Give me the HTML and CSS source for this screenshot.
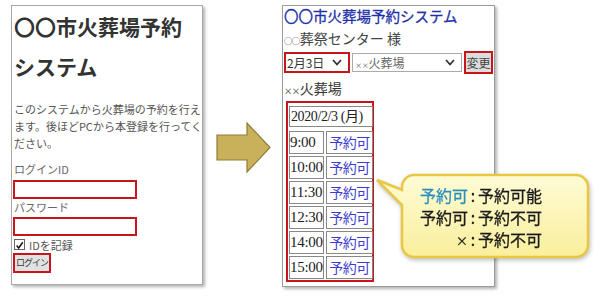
FILE: index.html
```html
<!DOCTYPE html>
<html lang="ja">
<head>
    <meta charset="UTF-8">
    <title>火葬場予約システム</title>
    <link rel="stylesheet" href="styles.css">
</head>
<body>
    <div class="slide">
        <!-- ログイン画面 -->
        <section class="login">
            <h1 class="login-title">〇〇市火葬場予約<br>システム</h1>
            <p class="intro">このシステムから火葬場の予約を行え<br>ます。後ほどPCから本登録を行ってく<br>ださい。</p>
            <div class="field-label">ログインID</div>
            <div class="text-box first"></div>
            <div class="field-label">パスワード</div>
            <div class="text-box"></div>
            <div class="remember">
                <span class="check-box">
                    <svg width="11" height="11" viewBox="0 0 11 11"><path d="M2 5.5 L4.5 8.5 L9.5 1.5" fill="none" stroke="#111" stroke-width="1.8"/></svg>
                </span>
                <span>IDを記録</span>
            </div>
            <div class="login-btn"><span>ログイン</span></div>
        </section>

        <div class="arrow-gap">
            <svg width="79" height="280" viewBox="0 0 79 280">
                <polygon points="14,130 44,130 44,118 67,142.5 44,167 44,155 14,155" fill="#c9b05a" stroke="#8f7d3a" stroke-width="1.2"/>
            </svg>
        </div>

        <!-- 予約画面 -->
        <section class="booking">
            <div class="booking-title">〇〇市火葬場予約システム</div>
            <div class="customer"><span class="mini">○○</span>葬祭センター 様</div>
            <div class="controls">
                <div class="select date-select">
                    <span>2月3日</span>
                    <svg width="10" height="7" viewBox="0 0 10 7"><polyline points="1,1 5,5.5 9,1" fill="none" stroke="#333" stroke-width="1.8"/></svg>
                </div>
                <div class="select hall-select">
                    <span><span class="mini">××</span>火葬場</span>
                    <svg width="10" height="7" viewBox="0 0 10 7"><polyline points="1,1 5,5.5 9,1" fill="none" stroke="#333" stroke-width="1.8"/></svg>
                </div>
                <div class="change-btn"><span>変更</span></div>
            </div>
            <div class="hall-name"><span class="mini">××</span>火葬場</div>
            <div class="slots">
                <div class="cell day">2020/2/3 (月)</div>
                <div class="cell time">9:00</div><div class="cell open">予約可</div>
                <div class="cell time">10:00</div><div class="cell open">予約可</div>
                <div class="cell time">11:30</div><div class="cell open">予約可</div>
                <div class="cell time">12:30</div><div class="cell open">予約可</div>
                <div class="cell time">14:00</div><div class="cell open">予約可</div>
                <div class="cell time">15:00</div><div class="cell open">予約可</div>
            </div>
        </section>

        <!-- 凡例の吹き出し -->
        <div class="callout">
            <svg class="callout-shape" width="218" height="92" viewBox="0 0 218 92">
                <defs>
                    <linearGradient id="calloutFill" x1="0" y1="0" x2="0" y2="1">
                        <stop offset="0" stop-color="#fffbd6"/>
                        <stop offset="1" stop-color="#f9ef9c"/>
                    </linearGradient>
                </defs>
                <path d="M39 3 H201 A12 12 0 0 1 213 15 V73 A12 12 0 0 1 201 85 H39 A12 12 0 0 1 27 73 V33 L2 8 L27 18 V15 A12 12 0 0 1 39 3 Z" fill="url(#calloutFill)" stroke="#e9c644" stroke-width="2.5"/>
            </svg>
            <div class="legend">
                <span class="term avail">予約可</span><span class="colon">:</span><span>予約可能</span>
                <span class="term">予約可</span><span class="colon">:</span><span>予約不可</span>
                <span class="term"><span class="cross">×</span></span><span class="colon">:</span><span>予約不可</span>
            </div>
        </div>
    </div>
</body>
</html>
```

FILE: styles.css
```css
* {
    box-sizing: border-box;
}

body {
    margin: 0;
    background: #fff;
    font-family: "Noto Sans CJK JP", sans-serif;
}

.slide {
    position: relative;
    display: flex;
    align-items: flex-start;
    width: 600px;
    height: 298px;
    padding: 5px 0 0 11px;
}

/* ログイン画面 */
.login {
    width: 192px;
    height: 280px;
    padding: 0 2px;
    border: 1px solid #a8a8a8;
    box-shadow: 2px 2px 3px rgba(0, 0, 0, 0.3);
}

.login-title {
    margin: 0;
    font-size: 21px;
    line-height: 40px;
    font-weight: bold;
    color: #333;
}

.intro {
    margin: 15px 0 0;
    font-size: 11px;
    line-height: 17px;
    color: #555;
    white-space: nowrap;
}

.field-label {
    height: 17px;
    font-size: 11px;
    line-height: 17px;
    color: #666;
}

.intro + .field-label {
    margin-top: 9px;
}

.text-box {
    width: 124px;
    height: 19px;
    margin: 1px 0 0 -1px;
    border: 2px solid #c8151b;
    background: #fff;
}

.text-box.first {
    margin-top: 2px;
}

.remember {
    display: flex;
    align-items: center;
    gap: 4px;
    height: 17px;
    font-size: 11px;
    color: #555;
}

.check-box {
    display: flex;
    width: 11px;
    height: 11px;
    border: 1px solid #666;
    background: #fff;
}

.login-btn {
    display: flex;
    width: 38px;
    height: 20px;
    margin-left: -1px;
    border: 2px solid #c8151b;
    overflow: hidden;
}

.login-btn span {
    flex: 1;
    background: #e2e2e2;
    font-size: 9px;
    line-height: 16px;
    color: #333;
    text-align: center;
    letter-spacing: -1px;
    white-space: nowrap;
}

/* 矢印 */
.arrow-gap {
    display: flex;
    width: 79px;
    height: 280px;
}

/* 予約画面 */
.booking {
    width: 213px;
    height: 282px;
    padding: 0 0 0 1px;
    border: 1px solid #9c9c9c;
    box-shadow: 2px 2px 3px rgba(0, 0, 0, 0.3);
}

.booking-title {
    font-size: 14.5px;
    line-height: 20px;
    color: #1e2fa8;
    white-space: nowrap;
    -webkit-text-stroke: 0.3px #1e2fa8;
}

.mini {
    font-size: 0.6em;
    letter-spacing: -0.5px;
}

.customer {
    margin-top: 2px;
    font-size: 14px;
    line-height: 20px;
    color: #444;
}

.controls {
    display: flex;
    align-items: center;
    gap: 2px;
    height: 22px;
    margin-top: 1px;
}

.select {
    display: flex;
    align-items: center;
    justify-content: space-between;
    font-size: 12px;
    background: #fff;
}

.date-select {
    width: 66px;
    height: 21px;
    padding: 0 6px 0 1px;
    border: 2px solid #c8151b;
    color: #333;
}

.hall-select {
    width: 110px;
    height: 19px;
    padding: 0 6px 0 2px;
    border: 1px solid #aaa;
    color: #666;
}

.change-btn {
    display: flex;
    width: 29px;
    height: 23px;
    border: 2px solid #c8151b;
}

.change-btn span {
    flex: 1;
    background: #dcdcdc;
    font-size: 12px;
    line-height: 19px;
    color: #444;
    text-align: center;
}

.hall-name {
    margin-top: 5px;
    font-size: 14px;
    line-height: 20px;
    color: #333;
}

.slots {
    display: grid;
    grid-template-columns: 35px 47px;
    grid-auto-rows: 23px;
    gap: 2px;
    width: 88px;
    margin: 1px 0 0 2px;
    padding: 3px 1px 1px 1px;
    border: 2px solid #c8151b;
}

.cell {
    border: 1px solid #888;
    font-size: 15px;
    line-height: 21px;
    white-space: nowrap;
    overflow: hidden;
}

.day {
    grid-column: span 2;
    height: 21px;
    margin-bottom: 2px;
    padding-left: 1px;
    font-size: 14px;
    line-height: 19px;
    letter-spacing: -0.4px;
    font-family: "Liberation Serif", "Noto Sans CJK JP", serif;
    color: #222;
}

.time {
    font-family: "Liberation Serif", serif;
    color: #222;
    letter-spacing: -0.3px;
}

.open {
    font-size: 14px;
    color: #3b3bd0;
    text-align: center;
    letter-spacing: -0.5px;
}

/* 吹き出し */
.callout {
    position: absolute;
    left: 375px;
    top: 172px;
    width: 218px;
    height: 92px;
    filter: drop-shadow(1px 2px 2px rgba(0, 0, 0, 0.25));
}

.callout-shape {
    position: absolute;
    left: 0;
    top: 0;
}

.legend {
    position: relative;
    display: grid;
    grid-template-columns: 51px 10px auto;
    grid-auto-rows: 22px;
    padding: 12px 0 0 42px;
    font-size: 16px;
    line-height: 22px;
    color: #1a1a1a;
    -webkit-text-stroke: 0.3px #1a1a1a;
}

.term {
    text-align: right;
}

.avail {
    color: #2b8fc0;
    -webkit-text-stroke: 0.3px #2b8fc0;
}

.cross {
    font-size: 12px;
}

.colon {
    text-align: center;
}
```
